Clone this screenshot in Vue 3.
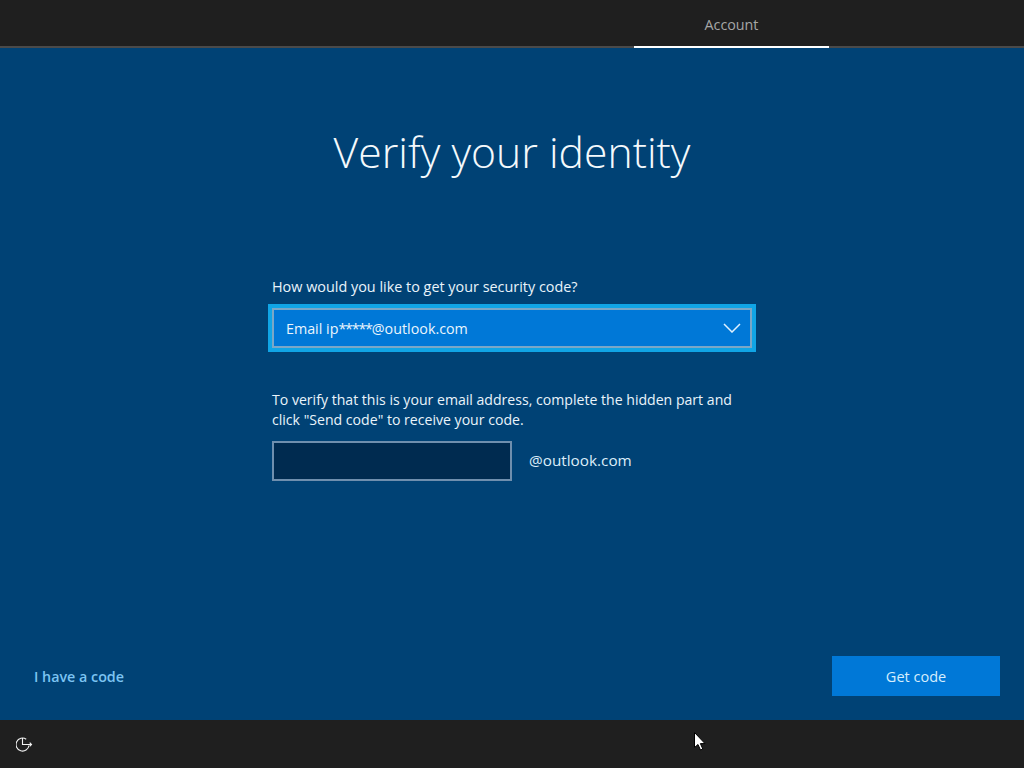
<script setup>
const title = 'Verify your identity'
</script>

<template>
  <div class="screen">
    <header class="topbar">
      <div class="tab">Account</div>
    </header>
    <main class="main">
      <h1 class="title">{{ title }}</h1>
      <section class="form">
        <label class="label">How would you like to get your security code?</label>
        <div class="select-ring">
          <div class="select">
            <span>Email ip<span class="stars">*****</span>@outlook.com</span>
            <svg class="chevron" width="18" height="10" viewBox="0 0 18 10">
              <path d="M1 1 L9 9 L17 1" fill="none" stroke="#dff1ff" stroke-width="1.5" />
            </svg>
          </div>
        </div>
        <p class="desc">To verify that this is your email address, complete the hidden part and<br />click "Send code" to receive your code.</p>
        <div class="email-row">
          <div class="input"></div>
          <span class="domain">@outlook.com</span>
        </div>
      </section>
      <div class="actions">
        <a class="link">I have a code</a>
        <button class="primary">Get code</button>
      </div>
    </main>
    <footer class="footer">
      <svg class="ease" width="17" height="16" viewBox="0 0 17 16">
        <path d="M10.2 2.2 A6.5 6.5 0 1 0 13 8.5" fill="none" stroke="#f2f2f2" stroke-width="1.1" />
        <path d="M6.5 1 V7.5 H15.5 M13.7 5.7 L15.5 7.5 L13.7 9.3" fill="none" stroke="#f2f2f2" stroke-width="1.1" />
      </svg>
    </footer>
    <svg class="cursor" width="12" height="19" viewBox="0 0 12 19">
      <path d="M0.5 0.5 V15.5 L4 12.5 L6.5 18 L8.8 17 L6.4 11.6 H11 Z" fill="#fff" stroke="#000" stroke-width="1" />
    </svg>
  </div>
</template>

<style>
html, body { margin: 0; background: #004275; }
</style>

<style scoped>
.screen {
  position: relative;
  width: 1024px;
  height: 768px;
  overflow: hidden;
  display: flex;
  flex-direction: column;
  font-family: "Open Sans", "Noto Sans", sans-serif;
  color: #eaf4fb;
  background: #004275;
}
.topbar {
  height: 46px;
  flex: none;
  background: #1f1f1f;
  border-bottom: 2px solid #4a4a4a;
  display: flex;
  padding-left: 634px;
}
.tab {
  width: 195px;
  height: 48px;
  box-sizing: border-box;
  border-bottom: 2px solid #fff;
  text-align: center;
  font-size: 14.3px;
  line-height: 50px;
  color: #a6a6a6;
}
.main {
  flex: 1;
  display: flex;
  flex-direction: column;
  min-height: 0;
}
.title {
  margin: 73px 0 0;
  text-align: center;
  font-weight: 300;
  font-size: 42.7px;
  line-height: 62px;
  color: #f4f9fc;
}
.form {
  margin: 94px 0 0 268px;
  width: 490px;
}
.label {
  display: block;
  margin-left: 4px;
  font-size: 14.4px;
  line-height: 20px;
}
.select-ring {
  margin-top: 7px;
  width: 488px;
  height: 48px;
  box-sizing: border-box;
  border: 4px solid #10a5e6;
  background: #0078d7;
}
.select {
  height: 100%;
  box-sizing: border-box;
  border: 2px solid #7aa7c7;
  background: #0078d7;
  padding: 0 9px 0 12px;
  display: flex;
  align-items: center;
  justify-content: space-between;
  font-size: 14.3px;
  color: #eaf5fd;
}
.stars {
  letter-spacing: -1.2px;
}
.chevron { display: block; }
.desc {
  margin: 38px 0 0 4px;
  font-size: 14.1px;
  line-height: 20px;
}
.email-row {
  margin: 11px 0 0 4px;
  display: flex;
  align-items: center;
  gap: 17px;
}
.input {
  width: 240px;
  height: 40px;
  box-sizing: border-box;
  border: 2px solid #6f8fae;
  background: #002b50;
}
.domain {
  font-size: 15.3px;
  padding-bottom: 2px;
  color: #dcedf9;
}
.actions {
  margin-top: auto;
  padding: 0 24px 24px 34px;
  display: flex;
  align-items: center;
  justify-content: space-between;
}
.link {
  font-size: 14.3px;
  font-weight: 600;
  color: #7cc4f2;
}
.primary {
  width: 168px;
  height: 40px;
  border: 0;
  padding: 0;
  background: #0078d7;
  color: #d6eefd;
  font: inherit;
  font-size: 14.5px;
}
.footer {
  height: 48px;
  flex: none;
  box-sizing: border-box;
  background: #1f1f1f;
  display: flex;
  align-items: center;
  padding: 2px 0 0 16px;
}
.cursor {
  position: absolute;
  left: 694px;
  top: 732px;
}
</style>
